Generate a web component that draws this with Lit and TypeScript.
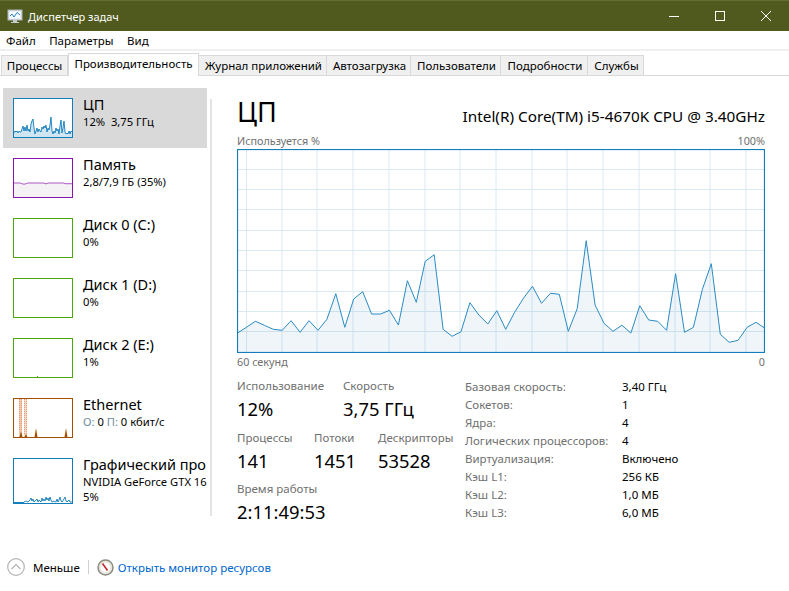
import { LitElement, html, css, svg } from 'lit';
import { customElement } from 'lit/decorators.js';

// y values in chart px, one sample per second
const CPU = [
  184, 178.3, 172.3, 176.3, 180.3, 181.3, 171.7, 183.3, 171.7, 181.3, 170.3, 144.7, 178.3, 150, 142.7,
  165, 165, 161.3, 176, 131.7, 153.3, 112.3, 105.7, 180.3, 187.3, 182.7, 153.7, 166, 175, 161.7, 180.3,
  163.3, 149, 137.3, 154.3, 144.3, 145.3, 182.3, 159.7, 91.7, 156, 174.3, 182.3, 176.3, 184, 156.7, 171,
  172.3, 181.3, 124.7, 183.3, 178.3, 140.3, 114.7, 185.3, 193.3, 191.3, 178.3, 173.3, 179.3,
];
const GRID_X = [9.5, 45, 80, 116, 152, 188, 223, 259, 295, 330, 366, 402, 438, 473, 509];
const GRID_Y = [21, 41, 61, 82, 102, 122, 143, 163, 183];

const THUMB_CPU =
  '1,35 2,33 3,34 4,33 5,35 6,33 7,34 8,34 9,31 10,28 11,33 12,29 13,33 14,27 15,33 16,31 17,34 18,26 19,23 20,21 21,30 22,36 23,33 24,30 25,34 26,31 27,33 28,34 29,29 30,31 31,28 32,30 33,27 34,34 35,30 36,32 37,27 38,19 39,33 40,36 41,33 42,35 43,30 44,33 45,31 46,36 47,28 48,22 49,35 50,30 51,23 52,34 53,36 54,35 55,36 56,33 57,36 58,33 59,34';
const THUMB_GPU =
  '11,44 13,43 15,44 17,42 18,40 19,43 20,41 21,44 22,43 24,41 25,44 26,42 28,44 29,40 30,43 31,41 32,43 33,39 34,42 35,40 36,43 37,39 38,42 39,44 41,43 43,44 44,41 45,44 46,42 47,39 48,43 49,44 51,41 52,39 53,43 54,44 56,42 57,44 59,44';

const SERIES = [
  { name: 'ЦП', lines: ['12%  3,75 ГГц'], kind: 'cpu', selected: true },
  { name: 'Память', lines: ['2,8/7,9 ГБ (35%)'], kind: 'mem' },
  { name: 'Диск 0 (C:)', lines: ['0%'], kind: 'disk' },
  { name: 'Диск 1 (D:)', lines: ['0%'], kind: 'disk' },
  { name: 'Диск 2 (E:)', lines: ['1%'], kind: 'disk2' },
  { name: 'Ethernet', lines: ['О: 0 П: 0 кбит/с'], kind: 'net' },
  { name: 'Графический про', lines: ['NVIDIA GeForce GTX 16', '5%'], kind: 'gpu' },
];

const DETAILS = [
  ['Базовая скорость:', '3,40 ГГц'],
  ['Сокетов:', '1'],
  ['Ядра:', '4'],
  ['Логических процессоров:', '4'],
  ['Виртуализация:', 'Включено'],
  ['Кэш L1:', '256 КБ'],
  ['Кэш L2:', '1,0 МБ'],
  ['Кэш L3:', '6,0 МБ'],
];

const TABS = [
  ['Процессы', 67],
  ['Производительность', 131],
  ['Журнал приложений', 128],
  ['Автозагрузка', 84],
  ['Пользователи', 90],
  ['Подробности', 87],
  ['Службы', 56],
];

@customElement('app-root')
export class AppRoot extends LitElement {
  static styles = css`
    :host {
      display: flex;
      flex-direction: column;
      width: 789px;
      height: 591px;
      overflow: hidden;
      background: #fff;
      color: #000;
      font-family: 'Noto Sans', 'Open Sans', sans-serif;
      font-size: 11.5px;
    }
    .titlebar {
      height: 30px;
      flex: none;
      display: flex;
      align-items: center;
      padding-left: 7px;
      background: #505a1e;
      border-top: 1px solid #646d36;
      color: #fff;
    }
    .titlebar .title {
      margin-left: 5px;
      flex: 1;
      font-size: 11px;
    }
    .win-btn {
      width: 46px;
      height: 30px;
      display: flex;
      align-items: center;
      justify-content: center;
    }
    .menu {
      height: 18px;
      flex: none;
      display: flex;
      align-items: center;
      gap: 13.5px;
      padding-left: 6px;
      border-bottom: 2px solid #f0f0f0;
    }
    .tabs {
      flex: none;
      height: 25px;
      display: flex;
      align-items: flex-end;
      padding-left: 1px;
      border-bottom: 1px solid #d9d9d9;
      box-sizing: border-box;
    }
    .tab {
      height: 20px;
      display: flex;
      align-items: center;
      justify-content: center;
      box-sizing: border-box;
      background: #f0f0f0;
      border: 1px solid #d9d9d9;
      border-left: none;
      border-bottom: none;
      white-space: nowrap;
    }
    .tab:first-child {
      border-left: 1px solid #d9d9d9;
    }
    .tab.shifted {
      padding-left: 2px;
    }
    .tab.active {
      height: 23px;
      margin-bottom: -1px;
      padding-bottom: 3px;
      background: #fff;
      border-left: 1px solid #d9d9d9;
    }
    .main {
      flex: 1;
      display: flex;
      min-height: 0;
    }
    .sidebar {
      width: 204px;
      flex: none;
      margin-left: 3px;
      padding-top: 12px;
    }
    .item {
      height: 60px;
      display: flex;
      align-items: flex-start;
      padding: 10px 0 0 10px;
      box-sizing: border-box;
      overflow: hidden;
    }
    .item.selected {
      background: #d9d9d9;
    }
    .thumb {
      width: 60px;
      height: 40px;
      flex: none;
      display: block;
    }
    .thumb.tall {
      height: 46px;
    }
    .item-text {
      margin-left: 10px;
      min-width: 0;
      white-space: nowrap;
      margin-top: -4px;
    }
    .item-name {
      font-size: 14.5px;
      line-height: 20px;
    }
    .item-line {
      font-size: 11.2px;
      line-height: 15px;
      white-space: pre;
    }
    .item-line .dim {
      color: #6f8ca0;
    }
    .divider {
      width: 2px;
      flex: none;
      height: 417px;
      margin: 23px 0 0 3px;
      background: #e3e3e3;
    }
    .perf {
      flex: none;
      width: 528px;
      margin-left: 25px;
      padding-top: 18px;
    }
    .perf-head {
      display: flex;
      justify-content: space-between;
      align-items: flex-end;
      height: 36px;
      margin-bottom: 3px;
    }
    .perf-title {
      font-size: 27px;
      line-height: 36px;
    }
    .perf-model {
      font-size: 15.3px;
      line-height: 24px;
      margin-bottom: 2px;
    }
    .axis {
      display: flex;
      justify-content: space-between;
      color: #707070;
      font-size: 10.8px;
      line-height: 16px;
    }
    .axis.bottom {
      margin-top: 1px;
    }
    .chart {
      display: block;
      width: 528px;
      height: 204px;
    }
    .stats {
      display: flex;
      margin-top: 8px;
    }
    .live {
      width: 228px;
      flex: none;
    }
    .row {
      display: flex;
      height: 51.5px;
    }
    .cell-label {
      color: #707070;
      line-height: 16px;
      white-space: nowrap;
    }
    .cell-value {
      font-size: 18.4px;
      line-height: 29px;
      white-space: nowrap;
    }
    .details {
      display: grid;
      grid-template-columns: 157px auto;
      grid-auto-rows: 18px;
      align-items: center;
      align-content: start;
      margin-top: -1px;
    }
    .details .key {
      color: #707070;
      white-space: nowrap;
    }
    .footer {
      flex: none;
      height: 45px;
      display: flex;
      align-items: center;
      padding: 0 0 3px 7px;
      box-sizing: border-box;
    }
    .less {
      margin-left: 8px;
    }
    .sep {
      width: 1px;
      height: 14px;
      margin: 0 8px;
      background: #d0d0d0;
    }
    .link {
      margin-left: 4px;
      color: #0066cc;
    }
  `;

  private thumb(kind: string) {
    const color: Record<string, string> = {
      cpu: '#117dbb',
      mem: '#8b12ae',
      disk: '#4da60c',
      disk2: '#4da60c',
      net: '#a74f01',
      gpu: '#117dbb',
    };
    const h = kind === 'gpu' ? 46 : 40;
    return html`<svg class="thumb ${kind === 'gpu' ? 'tall' : ''}" viewBox="0 0 60 ${h}">
      <rect width="60" height=${h} fill="#fff"></rect>
      ${kind === 'cpu'
        ? svg`<polygon points="1,39 ${THUMB_CPU} 59,39" fill="#cfe5f2"></polygon>
            <polyline points=${THUMB_CPU} fill="none" stroke="#117dbb" stroke-width=".9"></polyline>`
        : ''}
      ${kind === 'mem'
        ? svg`<path d="M1 25H8L9 26H13L14 25H31L32 25.7H34L35 25H51L52 25.7H59V39H1Z" fill="#f4f2f4"></path>
            <path d="M1 25H8L9 26H13L14 25H31L32 25.7H34L35 25H51L52 25.7H59" fill="none" stroke="#8b12ae" stroke-width=".7"></path>`
        : ''}
      ${kind === 'disk2' ? svg`<rect x="24" y="38" width="1" height="1" fill="#4da60c"></rect>` : ''}
      ${kind === 'net'
        ? svg`<rect x="6" y="1" width="3" height="38" fill="#f4c9ae"></rect>
            <rect x="11" y="1" width="3" height="38" fill="#f7dac6"></rect>
            <path d="M6.5 1V32M8.5 1V32M11.5 1V36M13.5 1V36" stroke="#e07f52" stroke-width=".7" stroke-dasharray="1 1" fill="none"></path>
            <path d="M6.5 39L8 33L9.5 39ZM11.5 39L13 36L14.5 39ZM21.5 39L23 30L24.5 39ZM51.5 39L53 30L54.5 39Z" fill="#a74f01"></path>`
        : ''}
      ${kind === 'gpu'
        ? svg`<rect x="1" y="44" width="10" height="1.5" fill="#117dbb"></rect>
            <polyline points=${THUMB_GPU} fill="none" stroke="#117dbb" stroke-width=".9"></polyline>`
        : ''}
      <rect x=".5" y=".5" width="59" height=${h - 1} fill="none" stroke=${color[kind]}></rect>
    </svg>`;
  }

  private chart() {
    const pts = CPU.map((y, i) => `${(0.5 + i * 8.94).toFixed(1)},${y}`).join(' ');
    return html`<svg class="chart" viewBox="0 0 528 204">
      ${GRID_X.map(x => svg`<line x1=${x} x2=${x} y1="0" y2="203" stroke="#d9eaf4"></line>`)}
      ${GRID_Y.map(y => svg`<line x1="0" x2="528" y1=${y - 0.5} y2=${y - 0.5} stroke="#d9eaf4"></line>`)}
      <polygon points="0.5,203 ${pts} 527.5,203" fill="#1a6fb0" fill-opacity=".07"></polygon>
      <polyline points=${pts} fill="none" stroke="#2a8bc4" stroke-width="1"></polyline>
      <rect x=".5" y=".5" width="527" height="203" fill="none" stroke="#117dbb" stroke-width="1.2"></rect>
    </svg>`;
  }

  private cell(label: string, value: string, width: number) {
    return html`<div style="width:${width}px">
      <div class="cell-label">${label}</div>
      <div class="cell-value">${value}</div>
    </div>`;
  }

  render() {
    return html`
      <div class="titlebar">
        <svg width="16" height="16" viewBox="0 0 16 16">
          <rect x="1" y="2" width="14" height="10" fill="#dfe6ea" stroke="#aab4ba"></rect>
          <rect x="2.5" y="3.5" width="11" height="7" fill="#f5fbff"></rect>
          <path d="M3 8L5 6L7 9L10 4.5L13 7" fill="none" stroke="#2a7fc0"></path>
          <path d="M6 12H10V14H12V15H4V14H6Z" fill="#c4ccd0"></path>
        </svg>
        <span class="title">Диспетчер задач</span>
        <div class="win-btn">
          <svg width="10" height="10"><path d="M0 5.5H10" stroke="#fff"></path></svg>
        </div>
        <div class="win-btn">
          <svg width="10" height="10"><rect x=".5" y=".5" width="9" height="9" fill="none" stroke="#fff"></rect></svg>
        </div>
        <div class="win-btn">
          <svg width="10" height="10"><path d="M0 0L10 10M10 0L0 10" stroke="#fff"></path></svg>
        </div>
      </div>
      <div class="menu"><span>Файл</span><span>Параметры</span><span>Вид</span></div>
      <div class="tabs">
        ${TABS.map(
          ([name, w], i) =>
            html`<div class="tab ${i === 1 ? 'active' : ''} ${i > 1 ? 'shifted' : ''}" style="width:${w}px">${name}</div>`
        )}
      </div>
      <div class="main">
        <div class="sidebar">
          ${SERIES.map(
            s => html`<div class="item ${s.selected ? 'selected' : ''}">
              ${this.thumb(s.kind)}
              <div class="item-text">
                <div class="item-name">${s.name}</div>
                ${s.lines.map(l =>
                  s.kind === 'net'
                    ? html`<div class="item-line"><span class="dim">О:</span> 0 <span class="dim">П:</span> 0 кбит/с</div>`
                    : html`<div class="item-line">${l}</div>`
                )}
              </div>
            </div>`
          )}
        </div>
        <div class="divider"></div>
        <div class="perf">
          <div class="perf-head">
            <div class="perf-title">ЦП</div>
            <div class="perf-model">Intel(R) Core(TM) i5-4670K CPU @ 3.40GHz</div>
          </div>
          <div class="axis"><span>Используется %</span><span>100%</span></div>
          ${this.chart()}
          <div class="axis bottom"><span>60 секунд</span><span>0</span></div>
          <div class="stats">
            <div class="live">
              <div class="row">${this.cell('Использование', '12%', 106)}${this.cell('Скорость', '3,75 ГГц', 110)}</div>
              <div class="row">
                ${this.cell('Процессы', '141', 77)}${this.cell('Потоки', '1451', 64)}${this.cell('Дескрипторы', '53528', 80)}
              </div>
              <div class="row">${this.cell('Время работы', '2:11:49:53', 200)}</div>
            </div>
            <div class="details">
              ${DETAILS.map(([k, v]) => html`<div class="key">${k}</div><div>${v}</div>`)}
            </div>
          </div>
        </div>
      </div>
      <div class="footer">
        <svg width="18" height="18" viewBox="0 0 18 18">
          <circle cx="9" cy="9" r="8.3" fill="none" stroke="#b4b4b4" stroke-width="1.2"></circle>
          <path d="M4.5 11L9 6.5L13.5 11" fill="none" stroke="#b4b4b4" stroke-width="1.2"></path>
        </svg>
        <span class="less">Меньше</span>
        <div class="sep"></div>
        <svg width="17" height="17" viewBox="0 0 17 17">
          <circle cx="8.5" cy="8.5" r="7.5" fill="#f3efe6" stroke="#8a8a80" stroke-width="1.5"></circle>
          <circle cx="8.5" cy="8.5" r="5.5" fill="#fff" stroke="#c9c4b6" stroke-width=".6"></circle>
          <path d="M5.5 4.5L10.5 11.5" stroke="#c8242a" stroke-width="1.6"></path>
        </svg>
        <span class="link">Открыть монитор ресурсов</span>
      </div>
    `;
  }
}
